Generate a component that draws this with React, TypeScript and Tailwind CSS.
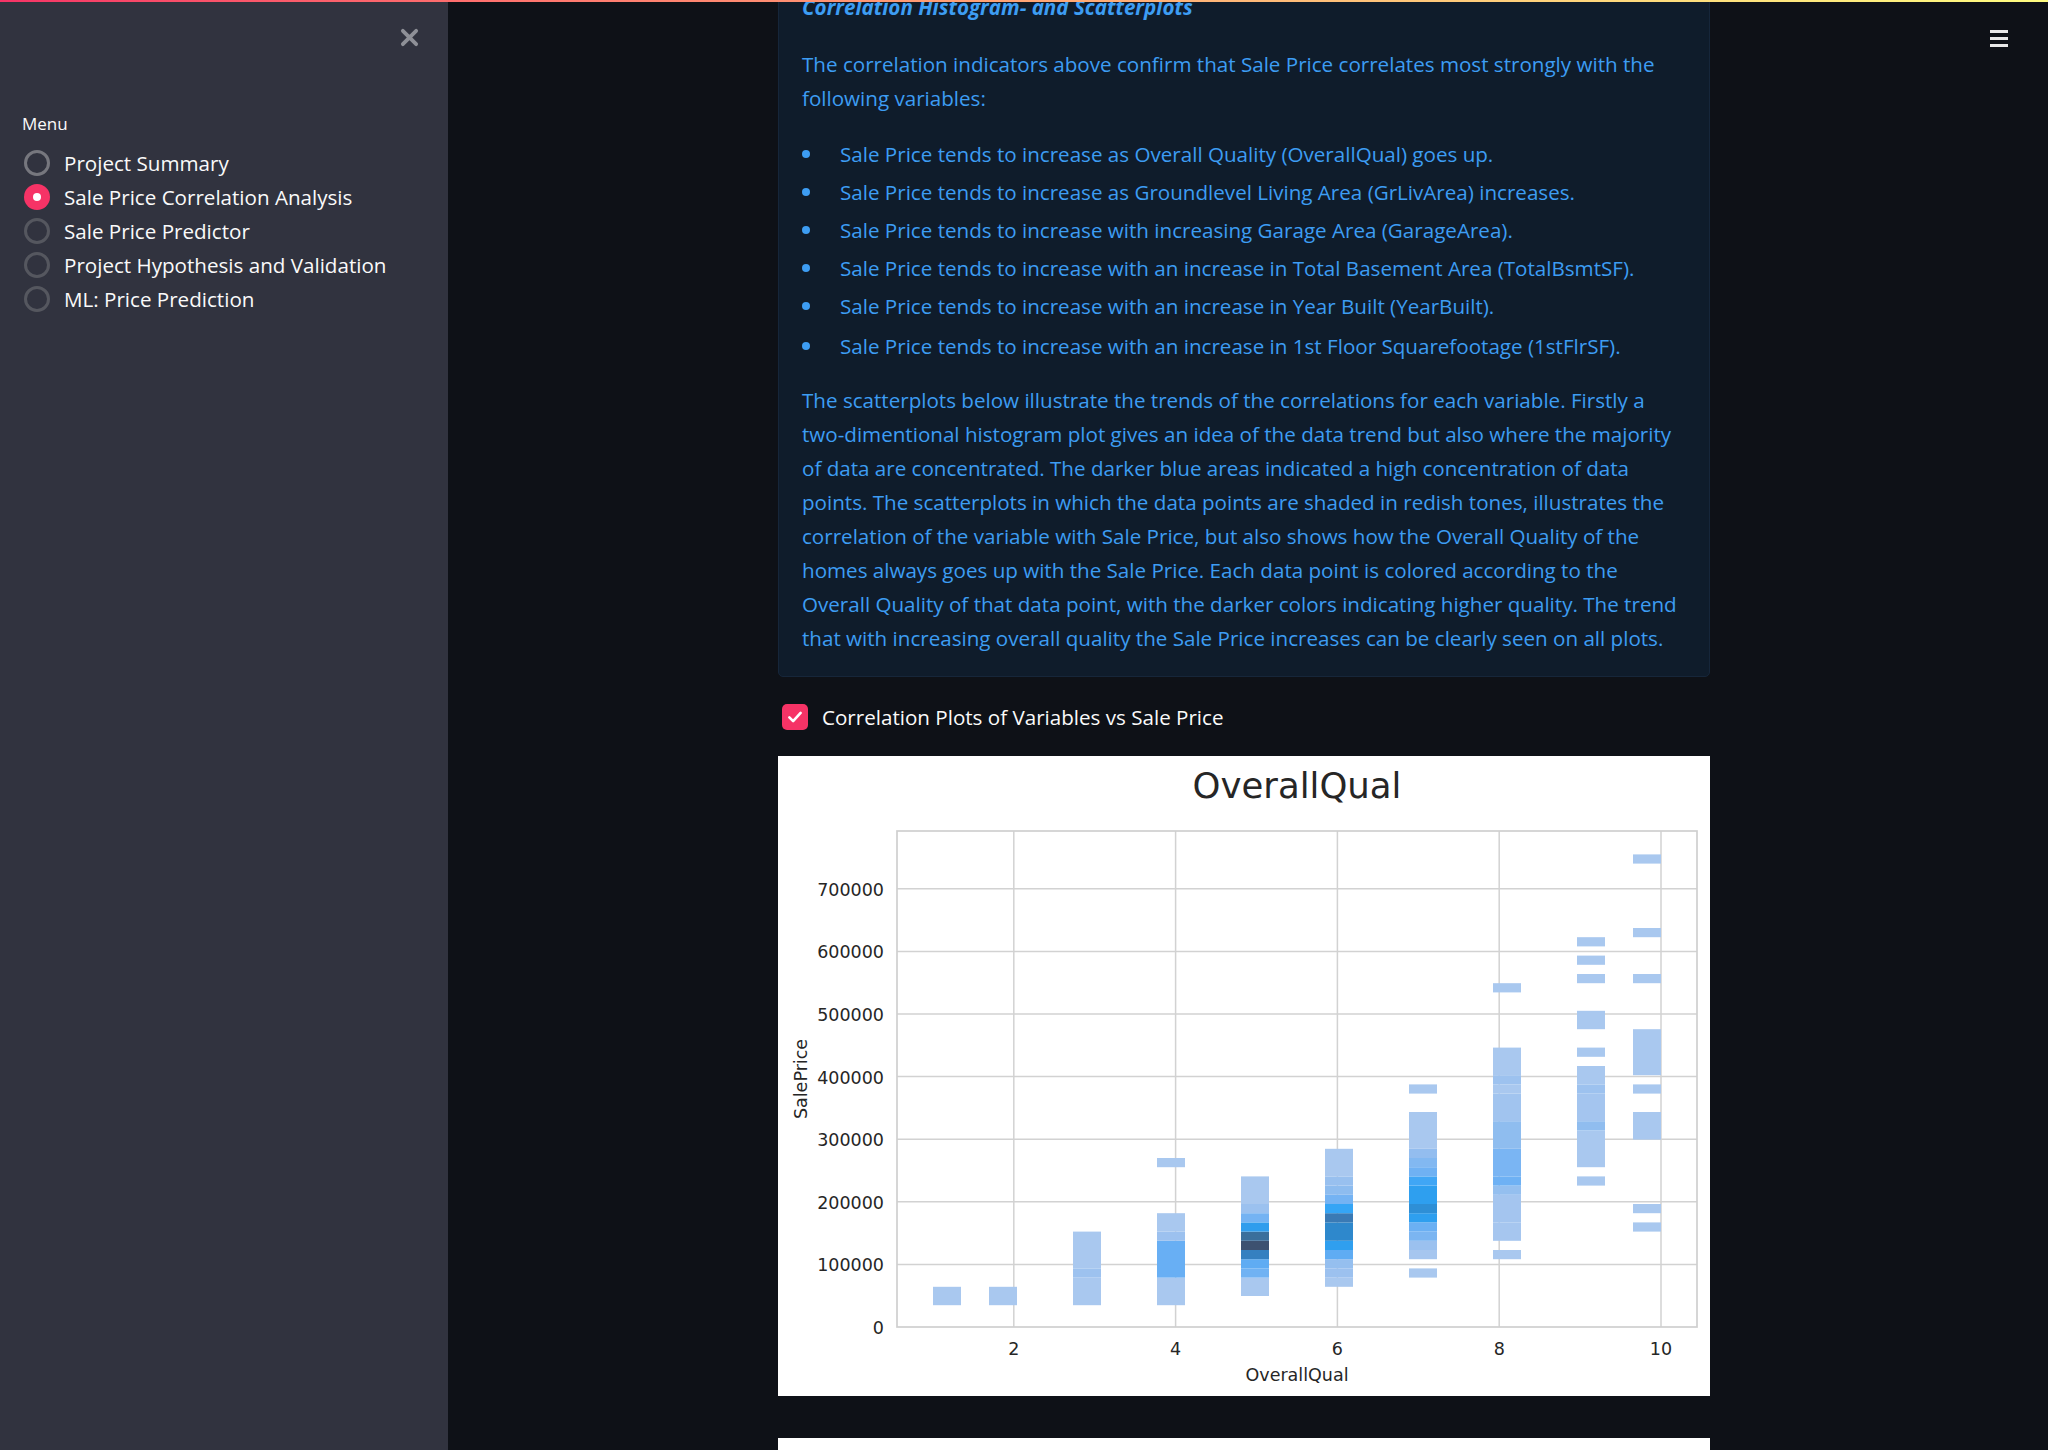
import React from 'react';

const MENU = [
  'Project Summary',
  'Sale Price Correlation Analysis',
  'Sale Price Predictor',
  'Project Hypothesis and Validation',
  'ML: Price Prediction',
];

const P1 = [
  'The correlation indicators above confirm that Sale Price correlates most strongly with the',
  'following variables:',
];

const BULLETS = [
  'Sale Price tends to increase as Overall Quality (OverallQual) goes up.',
  'Sale Price tends to increase as Groundlevel Living Area (GrLivArea) increases.',
  'Sale Price tends to increase with increasing Garage Area (GarageArea).',
  'Sale Price tends to increase with an increase in Total Basement Area (TotalBsmtSF).',
  'Sale Price tends to increase with an increase in Year Built (YearBuilt).',
  'Sale Price tends to increase with an increase in 1st Floor Squarefootage (1stFlrSF).',
];

const P2 = [
  'The scatterplots below illustrate the trends of the correlations for each variable. Firstly a',
  'two-dimentional histogram plot gives an idea of the data trend but also where the majority',
  'of data are concentrated. The darker blue areas indicated a high concentration of data',
  'points. The scatterplots in which the data points are shaded in redish tones, illustrates the',
  'correlation of the variable with Sale Price, but also shows how the Overall Quality of the',
  'homes always goes up with the Sale Price. Each data point is colored according to the',
  'Overall Quality of that data point, with the darker colors indicating higher quality. The trend',
  'that with increasing overall quality the Sale Price increases can be clearly seen on all plots.',
];

// histogram columns: x bin index, then [fromBin, toBin, colour]
type Seg = [number, number, string];
const L = '#a9c8ef';
const COLUMNS: { k: number; segs: Seg[] }[] = [
  { k: 0, segs: [[0, 1, L]] },
  { k: 2, segs: [[0, 1, L]] },
  { k: 5, segs: [[0, 2, L], [3, 3, '#9dc2ef'], [4, 7, L]] },
  { k: 8, segs: [[0, 2, L], [3, 6, '#68aff4'], [7, 7, '#9cc1ef'], [8, 9, L], [15, 15, L]] },
  {
    k: 11,
    segs: [
      [1, 2, L], [3, 3, '#70b2f3'], [4, 4, '#5facf3'], [5, 5, '#3580c0'], [6, 6, '#3d5170'],
      [7, 7, '#3a6f9c'], [8, 8, '#2f9ded'], [9, 9, '#74b3f3'], [10, 10, '#9bc1ef'], [11, 13, L],
    ],
  },
  {
    k: 14,
    segs: [
      [2, 2, L], [3, 3, '#9cc1ef'], [4, 4, '#95bfef'], [5, 5, '#5facf3'], [6, 6, '#2f9fef'],
      [7, 8, '#2e88cc'], [9, 9, '#3a7ab5'], [10, 10, '#35a5f5'], [11, 11, '#74b3f3'],
      [12, 12, '#8dbcef'], [13, 13, '#98c0ef'], [14, 16, L],
    ],
  },
  {
    k: 17,
    segs: [
      [3, 3, L], [5, 5, '#a6c6ef'], [6, 6, '#9bc1ef'], [7, 7, '#7bb5f1'], [8, 8, '#6bb0f3'],
      [9, 9, '#2e9fef'], [10, 10, '#2e8fd6'], [11, 12, '#2e9fef'], [13, 13, '#40a6f5'],
      [14, 14, '#6fb1f3'], [15, 15, '#82b8f1'], [16, 16, '#93bdef'], [17, 20, L], [23, 23, L],
    ],
  },
  {
    k: 20,
    segs: [
      [5, 5, L], [7, 8, '#a6c6ef'], [9, 11, '#a4c5ef'], [12, 12, '#94bfef'], [13, 13, '#6eb1f4'],
      [14, 16, '#7ab5f3'], [17, 19, '#8fbdef'], [20, 22, '#a1c4ef'], [23, 23, L],
      [24, 24, '#9dc2ef'], [25, 27, L], [34, 34, L],
    ],
  },
  {
    k: 23,
    segs: [
      [13, 13, L], [15, 18, L], [19, 19, '#90bdef'], [20, 22, '#a4c5ef'], [23, 23, '#9dc2ef'],
      [24, 25, L], [27, 27, L], [30, 31, L], [35, 35, L], [37, 37, L], [39, 39, L],
    ],
  },
  {
    k: 25,
    segs: [
      [8, 8, L], [10, 10, L], [18, 20, L], [23, 23, L], [25, 29, L], [35, 35, L], [40, 40, L], [48, 48, L],
    ],
  },
];

const BIN_H = 9.2;
const Y0 = 549.2;

function HistPlot() {
  const plot = { l: 119, r: 919, t: 75, b: 571 };
  const yTicks = [0, 1, 2, 3, 4, 5, 6, 7];
  const xTicks = [2, 4, 6, 8, 10];
  const font = 'DejaVu Sans, sans-serif';
  return (
    <svg width="932" height="640" viewBox="0 0 932 640" className="block">
      <rect width="932" height="640" fill="#ffffff" />
      {yTicks.slice(1).map((k) => (
        <line key={k} x1={plot.l} x2={plot.r} y1={571 - 62.6 * k} y2={571 - 62.6 * k} stroke="#d2d2d2" strokeWidth="1.5" />
      ))}
      {xTicks.map((q) => (
        <line key={q} x1={74 + 80.9 * q} x2={74 + 80.9 * q} y1={plot.t} y2={plot.b} stroke="#d2d2d2" strokeWidth="1.5" />
      ))}
      {COLUMNS.map((c) =>
        c.segs.map(([from, to, color], i) => (
          <rect
            key={`${c.k}-${i}`}
            x={155 + 28 * c.k}
            y={Y0 - BIN_H * (to + 1)}
            width="28"
            height={BIN_H * (to - from + 1)}
            fill={color}
          />
        ))
      )}
      <rect x={plot.l} y={plot.t} width={plot.r - plot.l} height={plot.b - plot.t} fill="none" stroke="#cfcfcf" strokeWidth="1.7" />
      {yTicks.map((k) => (
        <text key={k} x="106" y={571 - 62.6 * k + 7} textAnchor="end" fontSize="17.5" fill="#262626" fontFamily={font}>
          {k === 0 ? '0' : `${k}00000`}
        </text>
      ))}
      {xTicks.map((q) => (
        <text key={q} x={74 + 80.9 * q} y="599" textAnchor="middle" fontSize="17.5" fill="#262626" fontFamily={font}>
          {q}
        </text>
      ))}
      <text x="519" y="625" textAnchor="middle" fontSize="17.5" fill="#262626" fontFamily={font}>
        OverallQual
      </text>
      <text x="29" y="323" textAnchor="middle" fontSize="17.5" fill="#262626" fontFamily={font} transform="rotate(-90 29 323)">
        SalePrice
      </text>
      <text x="519" y="42" textAnchor="middle" fontSize="35.5" fill="#262626" fontFamily={font}>
        OverallQual
      </text>
    </svg>
  );
}

export default function App() {
  return (
    <div className="relative flex h-[1450px] w-[2048px] overflow-hidden bg-[#0e1117] font-['Open_Sans',sans-serif] text-[#fafafa]">
      {/* decoration bar */}
      <div className="absolute left-0 right-0 top-0 z-10 h-[2px] bg-linear-to-r from-[#f63366] to-[#fffd80]" />

      {/* Sidebar */}
      <aside className="flex w-[448px] shrink-0 flex-col bg-[#31333f]">
        <div className="flex justify-end pr-[29px] pt-[28px]">
          <svg width="19" height="19" viewBox="0 0 20 20" fill="none" stroke="#8e9097" strokeWidth="4" strokeLinecap="round">
            <path d="M3 3L17 17M17 3L3 17" />
          </svg>
        </div>
        <div className="mt-[66px] pl-[22px] text-[17px] leading-[22px]">Menu</div>
        <div className="mt-[11px] flex flex-col pl-[24px]">
          {MENU.map((item, i) => (
            <div key={item} className="flex h-[34px] items-center gap-[14px]">
              {i === 1 ? (
                <span className="flex h-[26px] w-[26px] items-center justify-center rounded-full bg-[#f63366]">
                  <span className="h-[8px] w-[8px] rounded-full bg-white" />
                </span>
              ) : (
                <span
                  className={
                    i === 0
                      ? 'h-[26px] w-[26px] rounded-full border-[3px] border-[#76777e]'
                      : 'h-[26px] w-[26px] rounded-full border-[3px] border-[#55575f]'
                  }
                />
              )}
              <span className="text-[20.6px]">{item}</span>
            </div>
          ))}
        </div>
      </aside>

      {/* Main */}
      <main className="relative min-w-0 flex-1">
        <button className="absolute right-[40px] top-[30px] flex w-[18px] flex-col gap-[4.5px]">
          <span className="h-[2.5px] w-full bg-[#e8e8e8]" />
          <span className="h-[2.5px] w-full bg-[#e8e8e8]" />
          <span className="h-[2.5px] w-full bg-[#e8e8e8]" />
        </button>

        <div className="ml-[330px] w-[932px]">
          {/* info box */}
          <div className="-mt-[33px] rounded-[5px] border border-[#16263a] bg-[#0f1c2b] px-[23px] pb-[21px] pt-[22px] text-[20.6px] leading-[34px] text-[#3d9df3]">
            <div className="font-bold italic">Correlation Histogram- and Scatterplots</div>
            <div className="mt-[23px]">
              {P1.map((l) => (
                <div key={l} className="whitespace-nowrap">{l}</div>
              ))}
            </div>
            <ul className="mt-[22px] flex flex-col gap-[4px]">
              {BULLETS.map((b, i) => (
                <li key={b} className={i === BULLETS.length - 1 ? 'mt-[2px] flex items-center' : 'flex items-center'}>
                  <span className="flex w-[38px] shrink-0">
                    <span className="h-[8px] w-[8px] rounded-full bg-[#3d9df3]" />
                  </span>
                  <span className="whitespace-nowrap">{b}</span>
                </li>
              ))}
            </ul>
            <div className="mt-[20px]">
              {P2.map((l) => (
                <div key={l} className="whitespace-nowrap">{l}</div>
              ))}
            </div>
          </div>

          {/* checkbox */}
          <div className="mt-[20px] flex h-[40px] items-center gap-[14px] pl-[4px]">
            <span className="flex h-[26px] w-[26px] items-center justify-center rounded-[5px] bg-[#f63366]">
              <svg width="18" height="18" viewBox="0 0 24 24" fill="none" stroke="#ffffff" strokeWidth="3.5" strokeLinecap="round" strokeLinejoin="round">
                <path d="M4.5 12.5l5 5 10-11" />
              </svg>
            </span>
            <span className="text-[20.6px]">Correlation Plots of Variables vs Sale Price</span>
          </div>

          {/* plots */}
          <div className="mt-[19px] bg-white">
            <HistPlot />
          </div>
          <div className="mt-[42px] h-[400px] bg-white" />
        </div>
      </main>
    </div>
  );
}
